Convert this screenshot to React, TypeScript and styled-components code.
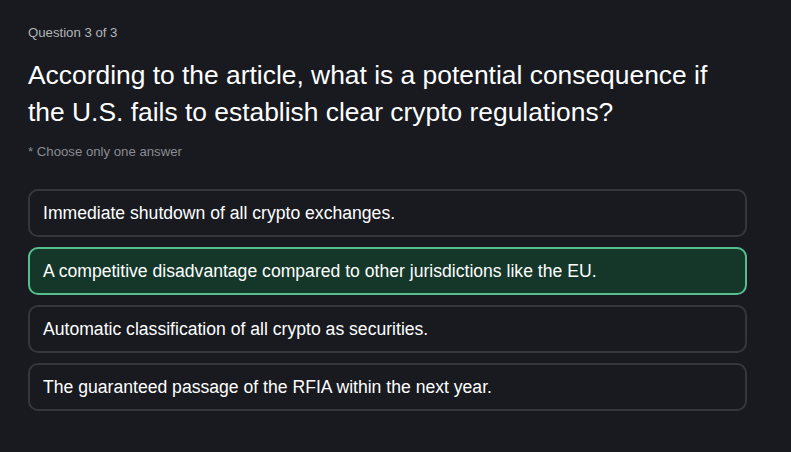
import styled, { createGlobalStyle } from 'styled-components'

const GlobalStyle = createGlobalStyle`
  html, body {
    margin: 0;
    padding: 0;
    background: #181a20;
  }
  body {
    font-family: "Liberation Sans", Arial, sans-serif;
    color: #ffffff;
  }
`

const Page = styled.div`
  min-height: 452px;
  box-sizing: border-box;
  padding: 23px 44px 0 28px;
  background: #181a20;
`

const Counter = styled.div`
  font-size: 13.2px;
  line-height: 19px;
  color: #b3b5ba;
`

const Title = styled.h1`
  margin: 15px 0 0;
  font-size: 26.4px;
  font-weight: 400;
  line-height: 37px;
  color: #ffffff;
`

const Hint = styled.div`
  margin-top: 11px;
  font-size: 13.2px;
  line-height: 19px;
  color: #8a8c91;
`

const Options = styled.div`
  display: flex;
  flex-direction: column;
  gap: 10px;
  margin-top: 28px;
`

const Option = styled.button<{ $selected?: boolean }>`
  display: flex;
  align-items: center;
  height: 48px;
  box-sizing: border-box;
  padding: 0 13px;
  border-radius: 10px;
  border: 2px solid ${(p) => (p.$selected ? '#55bd8e' : '#35373b')};
  background: ${(p) => (p.$selected ? '#143729' : '#181a20')};
  color: #ffffff;
  font-family: inherit;
  font-size: 17.6px;
  text-align: left;
  cursor: pointer;
`

const answers = [
  'Immediate shutdown of all crypto exchanges.',
  'A competitive disadvantage compared to other jurisdictions like the EU.',
  'Automatic classification of all crypto as securities.',
  'The guaranteed passage of the RFIA within the next year.'
]

const App = () => {
  const selected = 1
  return (
    <>
      <GlobalStyle />
      <Page>
        <Counter>Question 3 of 3</Counter>
        <Title>
          According to the article, what is a potential consequence if the
          U.S. fails to establish clear crypto regulations?
        </Title>
        <Hint>* Choose only one answer</Hint>
        <Options>
          {answers.map((a, i) => (
            <Option key={a} $selected={i === selected}>
              {a}
            </Option>
          ))}
        </Options>
      </Page>
    </>
  )
}

export default App
